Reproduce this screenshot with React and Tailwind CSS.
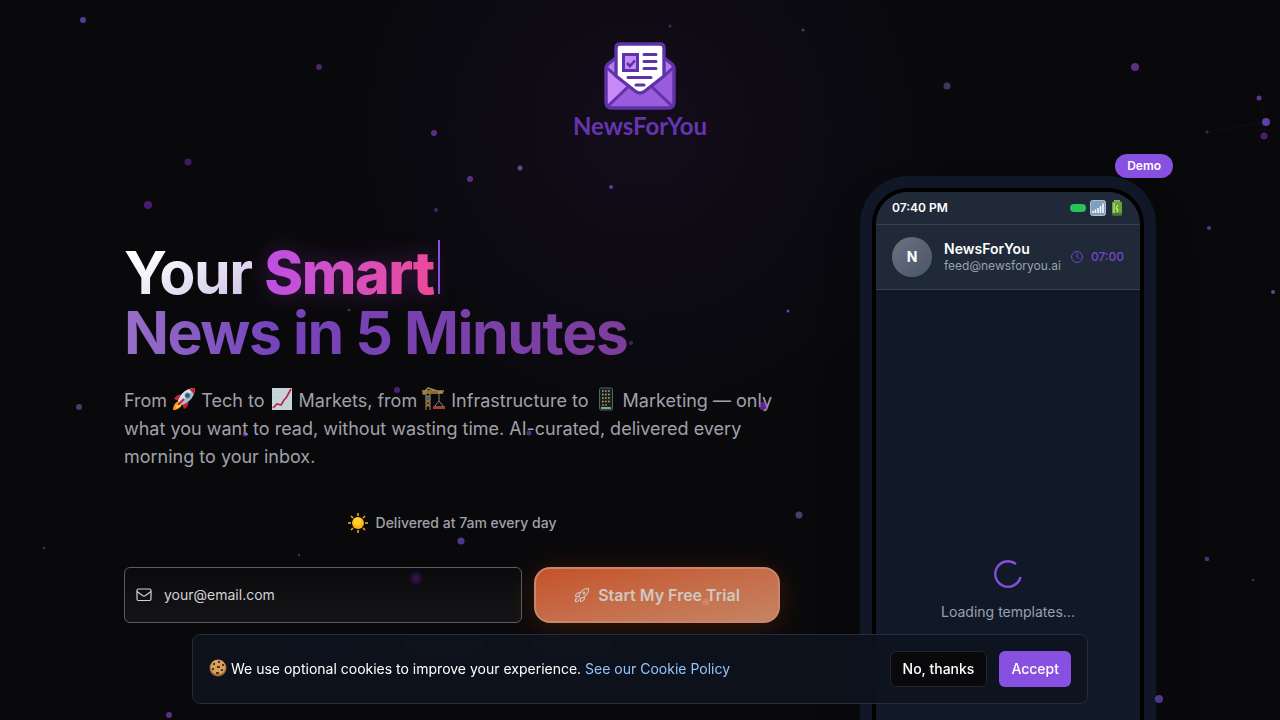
import React from 'react';

// x, y, radius, colour, opacity
const particles = [
  [83, 20, 3, '#8b5cf6', 0.6], [319, 67, 3, '#a855f7', 0.4], [434, 133, 3, '#a855f7', 0.5],
  [188, 162, 3.5, '#9333ea', 0.4], [148, 205, 4, '#9333ea', 0.45], [470, 179, 3, '#a855f7', 0.5],
  [520, 168, 2.5, '#a78bfa', 0.5], [436, 210, 2, '#a855f7', 0.35], [611, 187, 2, '#8b5cf6', 0.6],
  [670, 26, 1.5, '#a78bfa', 0.3], [803, 30, 1.5, '#a78bfa', 0.4], [947, 86, 3.5, '#a78bfa', 0.35],
  [1135, 67, 4, '#a855f7', 0.5], [1259, 98, 2.5, '#a855f7', 0.55], [1266, 122, 4, '#8b5cf6', 0.65],
  [1264, 136, 3.5, '#9333ea', 0.45], [1207, 132, 1.5, '#8b5cf6', 0.4], [1209, 228, 2, '#8b5cf6', 0.55],
  [1273, 292, 2, '#a78bfa', 0.5], [788, 311, 1.5, '#8b5cf6', 0.7], [631, 343, 2, '#a855f7', 0.35],
  [349, 310, 1.5, '#a78bfa', 0.3], [79, 407, 3, '#a78bfa', 0.4], [397, 390, 3, '#9333ea', 0.5],
  [763, 406, 4, '#9333ea', 0.6], [529, 433, 2.5, '#8b5cf6', 0.5], [245, 434, 2.5, '#8b5cf6', 0.5],
  [799, 515, 3.5, '#a78bfa', 0.4], [461, 541, 3.5, '#8b5cf6', 0.55], [299, 555, 1.2, '#a78bfa', 0.35],
  [44, 548, 1.2, '#a78bfa', 0.35], [1207, 559, 2.3, '#8b5cf6', 0.5], [1253, 580, 1.3, '#a855f7', 0.4],
  [1159, 699, 4, '#8b5cf6', 0.55], [169, 715, 3, '#a855f7', 0.5], [706, 602, 3.5, '#fca58a', 0.3],
];

const Particles = () => (
  <svg className="pointer-events-none absolute inset-0 z-20 h-full w-full" aria-hidden="true">
    <defs>
      <filter id="soft" x="-100%" y="-100%" width="300%" height="300%">
        <feGaussianBlur stdDeviation="2" />
      </filter>
    </defs>
    {particles.map(([x, y, r, color, opacity]) => (
      <circle key={`${x}-${y}`} cx={x} cy={y} r={r} fill={color} opacity={opacity} />
    ))}
    <circle cx="416" cy="578" r="5" fill="#9333ea" opacity="0.3" filter="url(#soft)" />
    <path d="M1259 98 1266 122 1264 136M1266 122 1207 132" stroke="#8b5cf6" strokeOpacity="0.06" fill="none" />
  </svg>
);

const LogoMark = () => (
  <svg viewBox="0 0 72 68" className="h-17 w-18" aria-hidden="true">
    <path d="M2 25 12 16v16zM70 25 60 16v16z" fill="#b57af0" />
    <path d="M2 25v35q0 6 6 6h56q6 0 6-6V25L36 48z" fill="#9a5bdc" />
    <path d="M2 25v35q0 3 2 4l21-21z" fill="#c88af8" />
    <path d="M12 16 4 22q-2 2-2 5v33q0 6 6 6h56q6 0 6-6V27q0-3-2-5l-8-6" fill="none" stroke="#5f32a8" strokeWidth="3.4" />
    <path d="M4 64 26 43M68 64 46 43M2 25l10 9M70 25l-10 9" stroke="#5f32a8" strokeWidth="3" fill="none" />
    <path d="M12 34V6q0-4 4-4h40q4 0 4 4v28L41 49q-5 4-10 0z" fill="#fff" stroke="#5f32a8" strokeWidth="3.4" strokeLinejoin="round" />
    <rect x="19.500" y="12.500" width="14" height="16" fill="#c48af5" stroke="#5f32a8" strokeWidth="3" />
    <path d="m23 21 3 3 5-5.500" fill="none" stroke="#5f32a8" strokeWidth="2.600" />
    <path d="M40 12.500h12M40 19.500h12M40 26.500h12M24 35.500h23M32 43h8" stroke="#5f32a8" strokeWidth="3" strokeLinecap="round" />
  </svg>
);

const Rocket = () => (
  <svg viewBox="0 0 24 24" className="inline-block size-6 align-text-bottom" role="img" aria-label="rocket">
    <path d="M2 12c2-4 5-5 8-4l-3 6zM12 22c4-2 5-5 4-8l-6 3z" fill="#c4232f" />
    <path d="M7 14c-4 1-6 5-6 9 4 0 8-2 9-6z" fill="#f59a1c" />
    <path d="M7 16c-2 1-3 3-3 5 2 0 4-1 5-3z" fill="#ffe14d" />
    <path d="M6 14C9 6 15 1 23 1c0 8-5 14-13 17z" fill="#a9bccb" />
    <path d="M6 14C9 6 15 1 23 1L9 16z" fill="#d5e0e8" />
    <path d="M17 2q3-1 6-1 0 3-1 6z" fill="#c4232f" />
    <circle cx="15.500" cy="8.500" r="2.500" fill="#245c91" stroke="#6d8193" />
    <path d="m6 18 6-6" stroke="#c4232f" strokeWidth="2" />
  </svg>
);

const Chart = () => (
  <svg viewBox="0 0 20 22" className="mx-0.5 inline-block h-6 w-5 align-text-bottom" role="img" aria-label="chart">
    <path d="M0 0h20v22H0z" fill="#c9d6d9" />
    <path d="M4 0v22M8 0v22M12 0v22M16 0v22M0 5h20M0 10h20M0 15h20M0 19h20" stroke="#b9c8cc" strokeWidth="0.500" />
    <path d="m1 20 4-4 4 1 3-5 2-2 5-9" fill="none" stroke="#bd2244" strokeWidth="1.700" />
  </svg>
);

const Crane = () => (
  <svg viewBox="0 0 24 24" className="inline-block size-6 align-text-bottom" role="img" aria-label="crane">
    <path d="M4 4v19M8 4v19M4 8l4 4-4 4 4 4M8 8l-4 4 4 4-4 4" stroke="#8f7543" strokeWidth="1.200" fill="none" />
    <path d="M0 4h22M6 1l15 5H1zM2 4v4" stroke="#a8894d" strokeWidth="1.500" fill="none" />
    <path d="M17 6v8l-4 5M17 14l4 5" stroke="#8b8577" fill="none" />
    <path d="M11 19h12v3H11z" fill="#994437" />
    <path d="M3 10h6v3H3z" fill="#53636b" />
  </svg>
);

const Mobile = () => (
  <svg viewBox="0 0 16 24" className="mx-1 inline-block h-6 w-4 align-text-bottom" role="img" aria-label="mobile phone">
    <rect x="1.500" y="1" width="13" height="22" rx="1.500" fill="#17201d" stroke="#3c6f5c" />
    {[4, 7.5, 11, 14.5].map((y) => (
      <path key={y} d={`M4 ${y}h8`} stroke="#b4a174" strokeWidth="1.700" strokeDasharray="1.700 1.300" />
    ))}
    <path d="M4 18h5" stroke="#c47742" strokeWidth="1.600" strokeDasharray="1.700 1.300" />
    <path d="M3 21h10" stroke="#9fc5ad" strokeWidth="1.600" />
  </svg>
);

const Sun = () => (
  <svg viewBox="0 0 20 20" className="size-5" role="img" aria-label="sun">
    <path d="M10 0v3M10 17v3M0 10h3M17 10h3M3 3l2 2M15 15l2 2M3 17l2-2M15 5l2-2" stroke="#f5ad1e" strokeWidth="1.500" />
    <circle cx="10" cy="10" r="6" fill="#fbb317" />
    <circle cx="9.500" cy="8.500" r="4" fill="#fed22f" />
  </svg>
);

const Cookie = () => (
  <svg viewBox="0 0 18 18" className="mr-1 inline-block size-[18px] align-text-bottom" role="img" aria-label="cookie">
    <circle cx="9" cy="9" r="8.500" fill="#a56f35" />
    <circle cx="9" cy="8" r="7.300" fill="#d3a15c" />
    <path d="M4 4h2v2H4zM9 2h2v2H9zM13 5h2v2h-2zM8 7h3v2H8zM3 9h2v2H3zM12 10h2v2h-2zM7 13h3v2H7z" fill="#583019" />
  </svg>
);

const StatusIcons = () => (
  <>
    <svg viewBox="0 0 16 16" className="size-4" role="img" aria-label="signal">
      <rect x="0.500" y="0.500" width="15" height="15" rx="2" fill="#7f9fba" stroke="#a9c1d4" />
      <path d="M3 13v-2M5.500 13v-3.500M8 13V8M10.500 13V6M13 13V3.500" stroke="#fff" strokeWidth="1.500" />
    </svg>
    <svg viewBox="0 0 14 16" className="h-4 w-3.5" role="img" aria-label="battery">
      <rect x="4" width="6" height="2" fill="#95a39a" />
      <rect x="2" y="1.500" width="10" height="14" rx="1.500" fill="#65a532" />
      <path d="M4 3v11" stroke="#a8d870" strokeWidth="1.500" />
      <path d="M7.500 5 6 9h2l-1 3" stroke="#d6f5a0" fill="none" />
      <path d="M2 14h10" stroke="#4b5a48" strokeWidth="1.500" />
    </svg>
  </>
);

const Phone = () => (
  <div className="relative w-[296px] shrink-0 rounded-[48px] bg-[#101827] p-3 shadow-2xl">
    <span className="absolute -top-[22px] -right-[17px] z-10 rounded-full bg-[#8850e0] px-3 py-1 text-xs font-semibold text-white">
      Demo
    </span>
    <div className="overflow-hidden rounded-[36px] border-4 border-black bg-[#111827]">
      <div className="flex h-[33px] items-center justify-between border-b border-gray-700 bg-[#1f2937] px-4">
        <span className="text-xs font-semibold text-white">07:40 PM</span>
        <div className="flex items-center gap-1">
          <span className="h-2 w-4 rounded-full bg-[#22c55e]" />
          <StatusIcons />
        </div>
      </div>
      <div className="flex items-center justify-between border-b border-gray-700 bg-[#1f2937] px-4 py-3">
        <div className="flex items-center gap-3">
          <div className="flex size-10 items-center justify-center rounded-full bg-gradient-to-br from-gray-500 to-gray-600 text-sm font-bold text-white">
            N
          </div>
          <div>
            <div className="text-sm leading-[18px] font-semibold text-white">NewsForYou</div>
            <div className="text-xs leading-4 text-gray-400">feed@newsforyou.ai</div>
          </div>
        </div>
        <div className="flex items-center gap-2 text-xs font-medium text-[#7744cc]">
          <svg viewBox="0 0 24 24" className="size-3" fill="none" stroke="currentColor" strokeWidth="2" strokeLinecap="round" strokeLinejoin="round" aria-hidden="true">
            <circle cx="12" cy="12" r="11" />
            <path d="M12 5v7l4 3" />
          </svg>
          07:00
        </div>
      </div>
      <div className="flex h-[600px] flex-col items-center justify-center gap-3">
        <svg viewBox="0 0 32 32" className="size-8" fill="none" stroke="#8450d9" strokeWidth="2.400" aria-hidden="true">
          <path d="M24 6a12.800 12.800 0 1 0 4.500 13" />
        </svg>
        <p className="text-sm text-gray-400">Loading templates...</p>
      </div>
    </div>
  </div>
);

const SignupForm = () => (
  <form className="mt-8 flex gap-3" onSubmit={(e) => e.preventDefault()}>
    <label className="flex h-14 min-w-0 flex-1 items-center gap-3 rounded-md border border-[#5c5c60] bg-gradient-to-b from-[#0a0a0c] to-[#151517] px-[11px]">
      <svg viewBox="0 0 16 16" className="size-4 shrink-0" fill="none" stroke="#d4d4d8" strokeWidth="1.200" strokeLinejoin="round" aria-hidden="true">
        <rect x="1" y="2" width="14" height="11.500" rx="1.500" />
        <path d="m1 4.500 5.500 4q1.500 1 3 0l5.500-4" />
      </svg>
      <input
        type="email"
        aria-label="Email"
        placeholder="your@email.com"
        className="w-full min-w-0 bg-transparent text-sm text-white outline-none placeholder:text-[#d4d4d8]"
      />
    </label>
    <button className="flex h-14 w-[246px] items-center justify-center gap-2 rounded-2xl border-2 border-[#c9866c] bg-gradient-to-br from-[#c4522a] to-[#c58463] font-semibold text-[#d0c8c0] shadow-[0_4px_30px_rgba(234,88,12,0.2)]">
      <svg viewBox="0 0 24 24" className="size-4" fill="none" stroke="currentColor" strokeWidth="1.600" strokeLinecap="round" strokeLinejoin="round" aria-hidden="true">
        <path d="M15.600 14.400a6 6 0 0 1-5.800 7.400V17m5.800-2.600A15 15 0 0 0 22 2.300 15 15 0 0 0 9.600 8.400m6 6a15 15 0 0 1-5.800 2.600M9.600 8.400a6 6 0 0 0-7.400 5.800H7m2.600-5.800A15 15 0 0 0 7 14.200m2.800 2.800-2.800-2.800M4.800 16.600a4.500 4.500 0 0 0-2.600 5.200 4.500 4.500 0 0 0 5.300-2.600" />
        <circle cx="15" cy="9" r="1.600" />
      </svg>
      Start My Free Trial
    </button>
  </form>
);

const CookieBanner = () => (
  <div className="fixed inset-x-4 bottom-4 z-30 mx-auto flex max-w-4xl items-center justify-between gap-4 rounded-lg border border-[#272c36] bg-[#0d131e]/85 p-4 backdrop-blur-md">
    <p className="text-sm text-white">
      <Cookie />
      We use optional cookies to improve your experience.{' '}
      <a href="#cookies" className="text-[#93c5fd]">See our Cookie Policy</a>
    </p>
    <div className="flex gap-3 text-sm font-medium text-white">
      <button className="h-9 rounded-md border border-[#25252b] bg-[#09090b] px-3">No, thanks</button>
      <button className="h-9 rounded-md bg-[#8850e0] px-3">Accept</button>
    </div>
  </div>
);

const App = () => {
  return (
    <div className="relative min-h-screen overflow-hidden bg-[#09090b] font-['Inter',sans-serif]">
      <div className="pointer-events-none absolute inset-x-0 -top-48 mx-auto h-[640px] max-w-[640px] bg-[radial-gradient(closest-side,rgba(140,60,200,0.08),rgba(88,40,180,0.04)_60%,transparent)]" />
      <Particles />
      <div className="relative mx-auto max-w-6xl px-[60px]">
        <header className="flex flex-col items-center pt-[42px]">
          <LogoMark />
          <span className="mt-1 font-['Lato',sans-serif] text-2xl leading-6 font-bold text-[#6535b0]">NewsForYou</span>
        </header>
        <main className="mt-[38px] flex gap-20">
          <section className="min-w-0 flex-1 pt-16">
            <h1 className="text-[59px] leading-[60px] font-bold tracking-tight">
              <span className="bg-gradient-to-br from-white from-20% to-[#cabde4] bg-clip-text text-transparent">Your</span>{' '}
              <span className="bg-gradient-to-r from-[#bc4fe4] to-[#ed4899] bg-clip-text font-extrabold text-transparent drop-shadow-[0_0_12px_rgba(168,60,220,0.3)]">
                Smart
              </span>
              <span className="ml-1 inline-block h-[54px] w-0.5 bg-[#8850e0]" />
              <br />
              <span className="bg-gradient-to-r from-[#976fc7] via-[#7543bc] via-30% to-[#7d3e9a] bg-clip-text text-transparent">
                News in 5 Minutes
              </span>
            </h1>
            <p className="mt-6 text-lg leading-7 text-[#a1a1aa]">
              From <Rocket /> Tech to <Chart /> Markets, from <Crane /> Infrastructure to <Mobile /> Marketing — only
              what you want to read, without wasting time. AI-curated, delivered every morning to your inbox.
            </p>
            <div className="mt-10 flex h-6 items-center justify-center gap-2 text-sm font-medium text-[#a1a1aa]">
              <Sun />
              Delivered at 7am every day
            </div>
            <SignupForm />
            <div className="mt-5 flex justify-center gap-12 opacity-40" aria-hidden="true">
              <span className="h-2 w-16 rounded-full bg-[#4c3a80]" />
              <span className="h-2 w-20 rounded-full bg-zinc-500" />
              <span className="h-2 w-20 rounded-full bg-zinc-500" />
            </div>
          </section>
          <Phone />
        </main>
      </div>
      <CookieBanner />
    </div>
  );
};

export default App;
